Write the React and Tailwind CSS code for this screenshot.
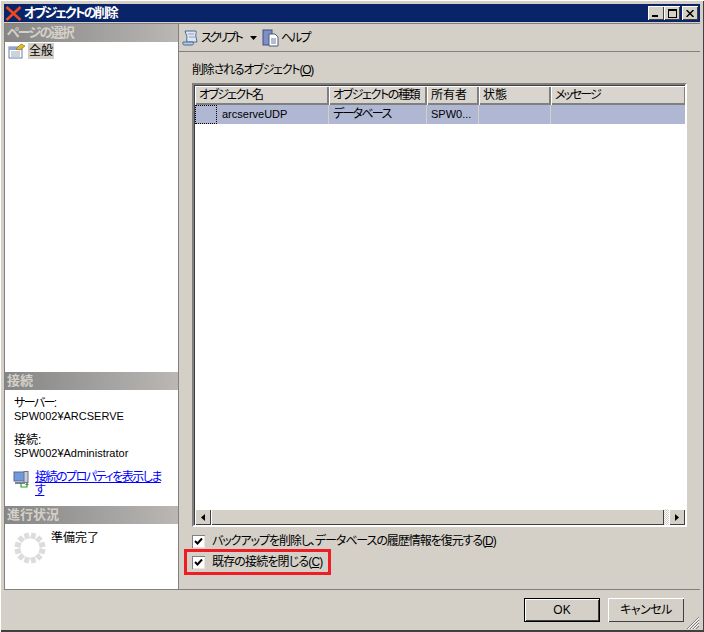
import React from "react";

const FONT = "font-['Liberation_Sans','Noto_Sans_CJK_JP',sans-serif] [font-feature-settings:'palt']";

function Header({ children, className = "" }) {
  return (
    <div className={`h-[18px] flex items-center pl-[2px] text-[13px] font-bold text-[#d4d0c8] bg-gradient-to-r from-[#868686] to-[#bab7b4] ${className}`}>
      {children}
    </div>
  );
}

function WinBtn({ children, className = "" }) {
  return (
    <div className={`w-[16px] h-[14px] bg-[#d4d0c8] flex items-center justify-center shadow-[inset_1px_1px_0_#ffffff,inset_-1px_-1px_0_#404040] ${className}`}>
      {children}
    </div>
  );
}

function Check({ label }) {
  return (
    <div className="flex items-center gap-[7px] h-[16px] text-[12px] text-black whitespace-nowrap">
      <div className="w-[13px] h-[13px] bg-white flex items-center justify-center shadow-[inset_1px_1px_0_#808080,inset_-1px_-1px_0_#e8e6e2]">
        <svg width="9" height="9" viewBox="0 0 9 9"><path d="M1 4 L3.5 6.5 L8 1.5" fill="none" stroke="#000" strokeWidth="2" /></svg>
      </div>
      <span>{label}</span>
    </div>
  );
}

function Th({ w, children, className = "" }) {
  return (
    <div style={{ width: w }} className={`h-[19px] shrink-0 flex items-center pl-[4px] pb-[1px] bg-[#d9d5ce] text-[12px] text-black whitespace-nowrap overflow-hidden shadow-[inset_1px_1px_0_#ffffff,inset_-2px_-2px_0_#808080] ${className}`}>
      {children}
    </div>
  );
}

function Td({ w, children, className = "" }) {
  return (
    <div style={{ width: w }} className={`h-[19px] shrink-0 flex items-center pl-[4px] pb-[1px] text-[12px] text-black whitespace-nowrap border-r border-[#d4d0c8] ${className}`}>
      {children}
    </div>
  );
}

function Spinner() {
  const n = 12;
  const items = [];
  for (let i = 0; i < n; i++) {
    const a = (i * 360) / n + 15;
    items.push(<rect key={i} x="13.5" y="0.5" width="5" height="6" fill="#dcdcdc" transform={`rotate(${a} 16 16)`} />);
  }
  return <svg width="32" height="32" viewBox="0 0 32 32">{items}</svg>;
}

export default function App() {
  return (
    <div className={`${FONT} w-[704px] h-[632px] bg-[#d4d0c8] flex flex-col overflow-hidden pl-[4px] pr-[4px] pt-[4px] shadow-[inset_1px_1px_0_#ffffff,inset_-1px_-2px_0_#404040]`}>
      {/* title bar */}
      <div className="h-[18px] shrink-0 bg-[#0a246a] flex items-center pl-[1px] pr-[2px]">
        <svg width="17" height="15" viewBox="0 0 17 15" className="mr-[2px]">
          <path d="M1.5 1 L15.5 14 M15.5 1 L1.5 14" stroke="#ec4a1c" strokeWidth="2.6" fill="none" />
        </svg>
        <span className="text-[13px] font-bold text-white tracking-[-1.9px]">オブジェクトの削除</span>
        <div className="ml-auto flex items-center">
          <WinBtn><div className="w-[6px] h-[2px] bg-black mt-[6px] -ml-[2px]" /></WinBtn>
          <WinBtn><div className="w-[9px] h-[9px] border border-black border-t-2" /></WinBtn>
          <WinBtn className="ml-[2px]">
            <svg width="8" height="7" viewBox="0 0 8 7"><path d="M0.5 0 L7.5 7 M7.5 0 L0.5 7" stroke="#000" strokeWidth="1.5" /></svg>
          </WinBtn>
        </div>
      </div>

      {/* body */}
      <div className="h-[567px] shrink-0 mt-[1px] flex border-y border-[#808080]">
        {/* left */}
        <div className="w-[175px] shrink-0 flex flex-col bg-white border-l border-[#808080] border-r">
          <Header className="tracking-[-1.8px]">ページの選択</Header>
          <div className="h-[330px] pl-[3px] pt-[1px] flex items-start gap-[2px]">
            <svg width="18" height="16" viewBox="0 0 18 16" className="mt-[0px]">
              <rect x="1" y="4" width="13" height="11" fill="#fff" stroke="#6b7fa8" />
              <path d="M1 4 H14 V7 H1 Z" fill="#8fa4d0" />
              <path d="M3 9 H12 M3 11 H12 M3 13 H12" stroke="#9aa6b8" />
              <path d="M8 6 L13 1 L17 3 L12 7 Z" fill="#e8b820" stroke="#7a6a10" strokeWidth="0.6" />
            </svg>
            <span className="bg-[#d4d0c8] h-[16px] px-[1px] text-[12px] leading-[16px] text-black">全般</span>
          </div>
          <Header>接続</Header>
          <div className="h-[116px] pl-[9px] pt-[7px] text-[12px] leading-[13px] text-black">
            <div className="tracking-[-1.6px]">サーバー:</div>
            <div className="text-[11px]">SPW002¥ARCSERVE</div>
            <div className="mt-[11px]">接続:</div>
            <div className="text-[11px]">SPW002¥Administrator</div>
            <div className="flex mt-[11px] -ml-[1px]">
              <svg width="18" height="18" viewBox="0 0 18 18" className="shrink-0 mr-[4px] mt-[0px]">
                <rect x="1" y="1" width="11" height="9" fill="#6f9bdc" stroke="#5a6a90" />
                <rect x="11" y="0.5" width="4" height="11" fill="#c8cdd8" stroke="#6a7088" />
                <path d="M2 12 H12" stroke="#7a8298" strokeWidth="2" />
                <path d="M8 12 V16 H14 V13" stroke="#2ea02e" strokeWidth="1.2" fill="none" />
                <path d="M12 14 L14 11.5 L16 14 Z" fill="#2ea02e" />
              </svg>
              <a className="text-[#0000ff] underline leading-[13px] w-[132px] break-all tracking-[-1.5px]">接続のプロパティを表示します</a>
            </div>
          </div>
          <Header>進行状況</Header>
          <div className="flex-1 flex items-start pl-[9px] pt-[7px]">
            <div className="mt-[1px]"><Spinner /></div>
            <span className="ml-[5px] text-[12px] leading-[14px] text-black">準備完了</span>
          </div>
        </div>

        {/* right */}
        <div className="flex-1 flex flex-col min-w-0">
          <div className="h-[28px] shrink-0 border-b border-[#808080] flex items-center pl-[3px] text-[12px] text-black whitespace-nowrap">
            <svg width="17" height="17" viewBox="0 0 17 17" className="mr-[2px]">
              <path d="M3 2 H14 C15 4 13 5 14 8 L15 13 H5 C4 10 6 8 4 5 Z" fill="#dfe6f2" stroke="#4a6a9a" />
              <path d="M1 13 H11 C12 15 11 16 10 16 H2 C1 16 0.5 14 1 13 Z" fill="#b8c8e0" stroke="#4a6a9a" />
              <path d="M6 5 H12 M7 8 H13" stroke="#8aa0c0" />
            </svg>
            <span className="w-[43px] tracking-[-2.2px]">スクリプト</span>
            <svg width="7" height="4" viewBox="0 0 7 4" className="ml-[6px]"><path d="M0 0 H7 L3.5 4 Z" fill="#000" /></svg>
            <svg width="17" height="18" viewBox="0 0 17 18" className="ml-[5px] mr-[2px]">
              <rect x="1" y="1" width="9" height="15" fill="#7d8fc4" stroke="#3f4f88" />
              <path d="M7 5 H13 L16 8 V17 H7 Z" fill="#fff" stroke="#4a5a78" />
              <path d="M9 10 H14 M9 12 H14 M9 14 H14" stroke="#6a7a98" />
            </svg>
            <span className="tracking-[-2px]">ヘルプ</span>
          </div>

          <div className="flex-1 flex flex-col pl-[13px] pr-[13px] min-h-0">
            <div className="h-[14px] mt-[11px] text-[12px] leading-[14px] text-black tracking-[-1.2px]">削除されるオブジェクト(<span className="underline">O</span>)</div>
            <div className="h-[444px] shrink-0 mt-[6px] flex flex-col bg-white border-[2px] border-t-[#808080] border-l-[#808080] border-r-white border-b-white shadow-[inset_1px_1px_0_#404040]">
              <div className="flex pl-[1px] pt-[1px] overflow-hidden">
                <Th w={134} className="tracking-[-1.7px]">オブジェクト名</Th>
                <Th w={98} className="tracking-[-1.4px]">オブジェクトの種類</Th>
                <Th w={52}>所有者</Th>
                <Th w={72}>状態</Th>
                <Th w={135} className="tracking-[-2px]">メッセージ</Th>
              </div>
              <div className="flex bg-[#afb7d3] ml-[1px] overflow-hidden">
                <Td w={134} className="!pl-0">
                  <div className="w-[22px] h-[19px] border border-dotted border-black mr-[5px]" />
                  <span className="text-[11px]">arcserveUDP</span>
                </Td>
                <Td w={98} className="tracking-[-1.7px]">データベース</Td>
                <Td w={52}><span className="text-[11px]">SPW0...</span></Td>
                <Td w={72} />
                <Td w={135} className="border-r-0" />
              </div>
              <div className="flex-1" />
              <div className="h-[16px] flex bg-[#d4d0c8] ml-[1px]">
                <div className="w-[16px] h-[16px] flex items-center justify-center bg-[#d4d0c8] shadow-[inset_1px_1px_0_#ffffff,inset_-1px_-1px_0_#404040]">
                  <svg width="4" height="7" viewBox="0 0 4 7"><path d="M4 0 V7 L0 3.5 Z" fill="#000" /></svg>
                </div>
                <div className="w-[453px] h-[16px] bg-[#d4d0c8] shadow-[inset_1px_1px_0_#ffffff,inset_-1px_-1px_0_#404040]" />
                <div className="flex-1 bg-[repeating-conic-gradient(#d4d0c8_0_25%,#ffffff_0_50%)] bg-[length:2px_2px]" />
                <div className="w-[16px] h-[16px] flex items-center justify-center bg-[#d4d0c8] shadow-[inset_1px_1px_0_#ffffff,inset_-1px_-1px_0_#404040]">
                  <svg width="4" height="7" viewBox="0 0 4 7"><path d="M0 0 V7 L4 3.5 Z" fill="#000" /></svg>
                </div>
              </div>
            </div>
            <div className="mt-[6px] tracking-[-1.05px]"><Check label={<>バックアップを削除し、データベースの履歴情報を復元する(<span className="underline">D</span>)</>} /></div>
            <div className="mt-0 -ml-[8px] w-[147px] h-[26px] border-[3px] border-[#ee1c25] flex items-center pl-[5px] tracking-[-0.85px]">
              <Check label={<>既存の接続を閉じる(<span className="underline">C</span>)</>} />
            </div>
          </div>
        </div>
      </div>

      {/* footer */}
      <div className="relative flex-1 flex justify-end gap-[8px] pt-[8px] pr-[16px]">
        <button className="w-[76px] h-[24px] bg-[#d4d0c8] border border-black text-[12px] text-black shadow-[inset_1px_1px_0_#ffffff,inset_-1px_-1px_0_#404040]">OK</button>
        <button className="w-[76px] h-[24px] bg-[#d4d0c8] text-[12px] text-black tracking-[-0.5px] shadow-[inset_1px_1px_0_#ffffff,inset_-1px_-1px_0_#404040]">キャンセル</button>
        <svg width="12" height="12" viewBox="0 0 12 12" className="absolute right-[1px] bottom-[3px]">
          <path d="M12 0 L0 12 M12 3 L3 12 M12 6 L6 12 M12 9 L9 12" stroke="#808080" />
          <path d="M12 1 L1 12 M12 4 L4 12 M12 7 L7 12" stroke="#ffffff" />
        </svg>
      </div>
    </div>
  );
}
